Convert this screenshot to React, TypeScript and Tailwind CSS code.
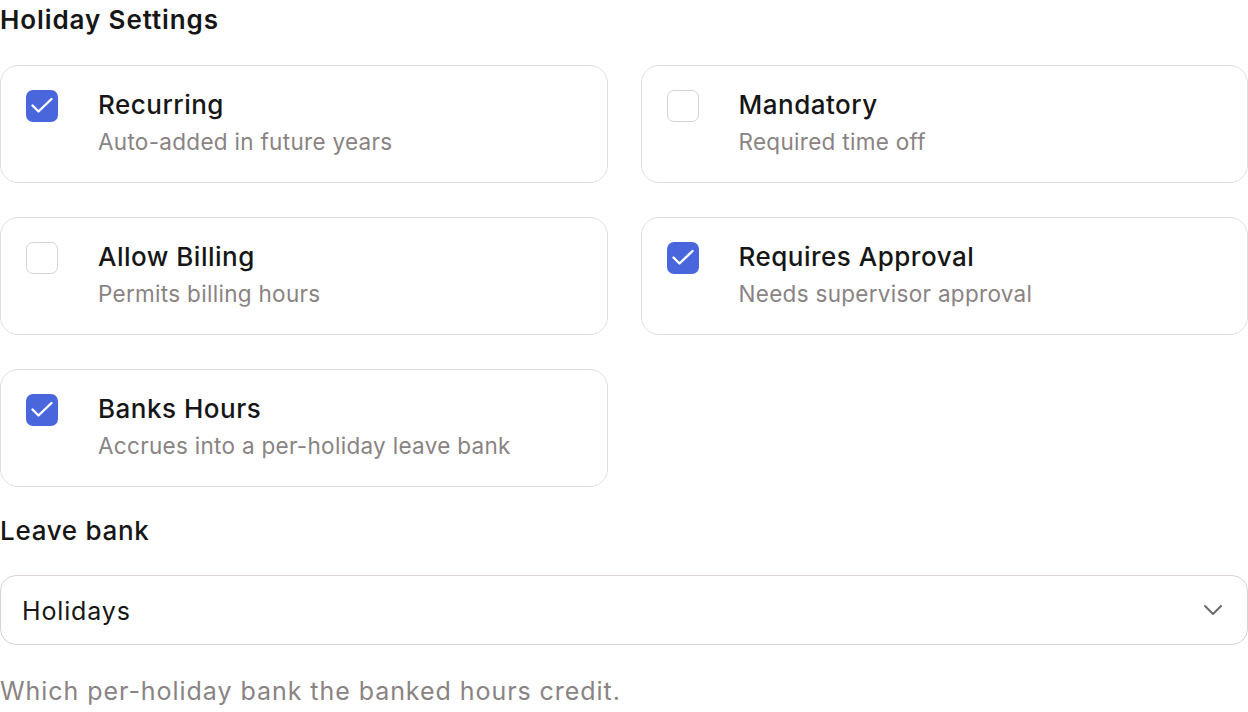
import React from "react";

type Setting = {
    title: string;
    description: string;
    checked: boolean;
};

const settings: Setting[] = [
    { title: "Recurring", description: "Auto-added in future years", checked: true },
    { title: "Mandatory", description: "Required time off", checked: false },
    { title: "Allow Billing", description: "Permits billing hours", checked: false },
    { title: "Requires Approval", description: "Needs supervisor approval", checked: true },
    { title: "Banks Hours", description: "Accrues into a per-holiday leave bank", checked: true },
];

function CheckBox(props: { checked: boolean }) {
    if (props.checked) {
        return (
            <div className="size-[32px] shrink-0 rounded-[7px] bg-[#4966dd]">
                <svg width="32" height="32" viewBox="0 0 32 32" fill="none">
                    <path
                        d="M6.5 15.5 12.5 21.5 25.5 9"
                        stroke="white"
                        strokeWidth="2.4"
                        strokeLinecap="round"
                        strokeLinejoin="round"
                    />
                </svg>
            </div>
        );
    }
    return (
        <div className="size-[32px] shrink-0 rounded-[7px] border-[1.5px] border-[#d8d2d2] bg-white" />
    );
}

function SettingCard(props: { setting: Setting }) {
    const { setting } = props;
    return (
        <div className="h-[118px] rounded-[18px] border-[1.5px] border-[#e4dfdf] bg-white pl-[25px] pt-[23.5px] flex gap-[40px]">
            <CheckBox checked={setting.checked} />
            <div className="flex flex-col">
                <div className="text-[26px] leading-[30px] font-medium tracking-[0.5px] text-[#161616]">
                    {setting.title}
                </div>
                <div className="mt-[8px] text-[22.5px] leading-[28px] tracking-[0.3px] text-[#8a8383]">
                    {setting.description}
                </div>
            </div>
        </div>
    );
}

export default function App() {
    return (
        <div className="w-[1248px] h-[712px] overflow-hidden bg-white font-['Inter',sans-serif] text-[#161616]">
            {/* Heading */}
            <h2 className="text-[26px] leading-[40px] font-semibold tracking-[0.9px]">Holiday Settings</h2>

            {/* Toggle cards */}
            <div className="mt-[25px] grid grid-cols-2 gap-x-[33px] gap-y-[34px]">
                {settings.map((s) => (
                    <SettingCard key={s.title} setting={s} />
                ))}
            </div>

            {/* Leave bank select */}
            <div className="mt-[29px] text-[26px] leading-[30px] font-medium tracking-[0.7px]">Leave bank</div>
            <div className="mt-[29px] h-[70px] rounded-[16px] border-[1.5px] border-[#d8d2d2] bg-white flex items-center justify-between pl-[21px] pr-[24px]">
                <span className="text-[25px] tracking-[0.85px] text-[#161616] pt-[3px]">Holidays</span>
                <svg width="20" height="12" viewBox="0 0 20 12" fill="none">
                    <path
                        d="M2 2 10 10 18 2"
                        stroke="#6f6a6a"
                        strokeWidth="2"
                        strokeLinecap="round"
                        strokeLinejoin="round"
                    />
                </svg>
            </div>
            <div className="mt-[31px] text-[25px] leading-[30px] tracking-[0.95px] text-[#8a8383]">
                Which per-holiday bank the banked hours credit.
            </div>
        </div>
    );
}
